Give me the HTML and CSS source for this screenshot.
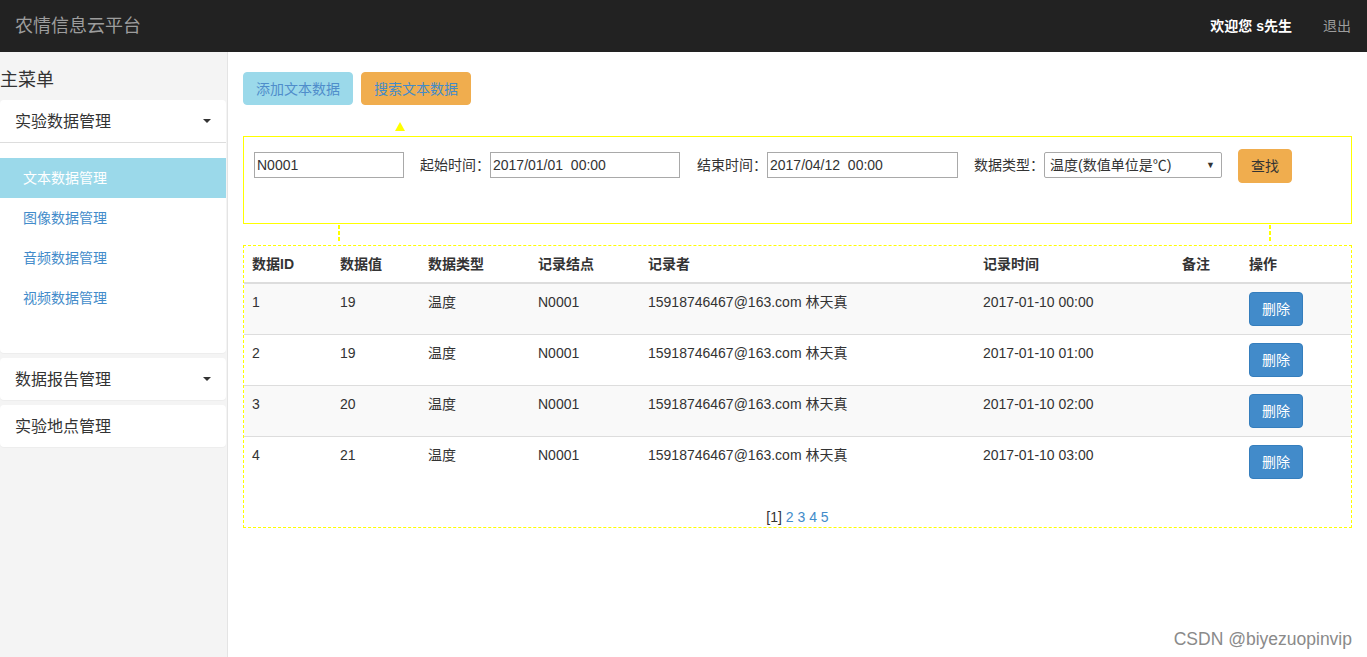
FILE: index.html
```html
<!DOCTYPE html>
<html lang="zh-CN">
<head>
<meta charset="utf-8">
<title>农情信息云平台</title>
<link rel="stylesheet" href="styles.css">
</head>
<body>
<header class="navbar">
  <div class="brand">农情信息云平台</div>
  <div class="nav-right">
    <span class="welcome">欢迎您 s先生</span>
    <a class="logout">退出</a>
  </div>
</header>
<div class="layout">
  <aside class="sidebar">
    <div class="menu-title">主菜单</div>
    <div class="panel panel-open">
      <div class="panel-heading">实验数据管理<span class="caret"></span></div>
      <div class="panel-body">
        <a class="item active">文本数据管理</a>
        <a class="item">图像数据管理</a>
        <a class="item">音频数据管理</a>
        <a class="item">视频数据管理</a>
      </div>
    </div>
    <div class="panel">
      <div class="panel-heading">数据报告管理<span class="caret"></span></div>
    </div>
    <div class="panel">
      <div class="panel-heading">实验地点管理</div>
    </div>
  </aside>
  <main class="main">
    <div class="toolbar">
      <button class="btn btn-info">添加文本数据</button>
      <button class="btn btn-warning">搜索文本数据</button>
    </div>
    <div class="pointer-row"><span class="triangle"></span></div>
    <div class="search-box">
      <input class="inp inp-node" type="text" value="N0001">
      <label class="lbl">起始时间：</label>
      <input class="inp inp-date" type="text" value="2017/01/01  00:00">
      <label class="lbl">结束时间：</label>
      <input class="inp inp-date2" type="text" value="2017/04/12  00:00">
      <label class="lbl">数据类型：</label>
      <div class="select">温度(数值单位是℃)<span class="sel-caret">▼</span></div>
      <button class="btn btn-warning btn-find">查找</button>
    </div>
    <div class="connector">
      <span class="vline vline-left"></span>
      <span class="vline vline-right"></span>
    </div>
    <div class="table-box">
      <table class="data-table">
        <thead>
          <tr>
            <th class="c1">数据ID</th><th class="c2">数据值</th><th class="c3">数据类型</th><th class="c4">记录结点</th><th class="c5">记录者</th><th class="c6">记录时间</th><th class="c7">备注</th><th class="c8">操作</th>
          </tr>
        </thead>
        <tbody>
          <tr><td>1</td><td>19</td><td>温度</td><td>N0001</td><td>15918746467@163.com 林天真</td><td>2017-01-10 00:00</td><td></td><td><button class="btn btn-primary">删除</button></td></tr>
          <tr><td>2</td><td>19</td><td>温度</td><td>N0001</td><td>15918746467@163.com 林天真</td><td>2017-01-10 01:00</td><td></td><td><button class="btn btn-primary">删除</button></td></tr>
          <tr><td>3</td><td>20</td><td>温度</td><td>N0001</td><td>15918746467@163.com 林天真</td><td>2017-01-10 02:00</td><td></td><td><button class="btn btn-primary">删除</button></td></tr>
          <tr><td>4</td><td>21</td><td>温度</td><td>N0001</td><td>15918746467@163.com 林天真</td><td>2017-01-10 03:00</td><td></td><td><button class="btn btn-primary">删除</button></td></tr>
        </tbody>
      </table>
      <div class="pager">[1] <a>2</a> <a>3</a> <a>4</a> <a>5</a></div>
    </div>
  </main>
</div>
<div class="watermark">CSDN @biyezuopinvip</div>
</body>
</html>
```
FILE: styles.css
```css
* { box-sizing: border-box; }
html, body { margin: 0; padding: 0; height: 100%; }
body {
  font-family: "Liberation Sans", "Noto Sans CJK SC", sans-serif;
  font-size: 14px;
  line-height: 20px;
  color: #333;
  background: #fff;
  overflow: hidden;
}
a { color: #428bca; text-decoration: none; cursor: pointer; }

.navbar {
  height: 52px;
  background: #222;
  display: flex;
  align-items: center;
  justify-content: space-between;
  padding: 0 16px 0 15px;
}
.brand { color: #9d9d9d; font-size: 18px; line-height: 20px; }
.nav-right { display: flex; align-items: center; }
.welcome { color: #fff; font-weight: bold; margin-right: 31px; }
.logout { color: #9d9d9d; }

.layout { display: flex; height: calc(100% - 52px); }
.sidebar {
  width: 228px;
  flex: none;
  background: #f4f4f4;
  border-right: 1px solid #e4e4e4;
  padding-right: 1px;
}
.menu-title { font-size: 18px; line-height: 20px; padding: 18px 0 10px; }
.panel {
  background: #fff;
  border-radius: 4px;
  margin-bottom: 5px;
  box-shadow: 0 1px 1px rgba(0,0,0,0.03);
}
.panel-heading {
  height: 42px;
  padding: 10px 15px;
  font-size: 16px;
  line-height: 21px;
  display: flex;
  justify-content: space-between;
  align-items: center;
}
.panel-open .panel-heading { height: 43px; border-bottom: 1px solid #ddd; }
.caret {
  width: 0; height: 0;
  border-left: 4px solid transparent;
  border-right: 4px solid transparent;
  border-top: 4px solid #333;
  margin-right: 0;
}
.panel-body { padding: 15px 0 35px; }
.item {
  display: block;
  height: 40px;
  line-height: 40px;
  padding-left: 23px;
  color: #428bca;
}
.item.active { background: #9bd9ea; color: #fff; }

.main { flex: 1; padding: 20px 15px 0 15px; position: relative; }
.toolbar { display: flex; gap: 8px; }
.btn {
  font-family: inherit;
  font-size: 14px;
  line-height: 20px;
  border: 1px solid transparent;
  border-radius: 4px;
  padding: 6px 12px;
  cursor: pointer;
}
.btn-info { background: #9bd9ea; border-color: #9bd9ea; color: #4f8dcb; height: 33px; width: 110px; }
.btn-warning { background: #f0ad4e; border-color: #f0ad4e; color: #428bca; height: 33px; width: 110px; }
.btn-primary { background: #428bca; border-color: #357ebd; color: #fff; width: 54px; height: 34px; }

.pointer-row { height: 31px; position: relative; }
.triangle {
  position: absolute;
  left: 152px;
  top: 17px;
  width: 0; height: 0;
  border-left: 5px solid transparent;
  border-right: 5px solid transparent;
  border-bottom: 9px solid #ffff00;
}
.search-box {
  height: 88px;
  border: 1px solid #ffff00;
  padding: 12px 10px;
  display: flex;
  align-items: flex-start;
}
.inp {
  height: 26px;
  border: 1px solid #a9a9a9;
  font-family: inherit;
  font-size: 14px;
  color: #333;
  padding: 1px 2px;
  margin-top: 3px;
}
.inp-node { width: 150px; margin-right: 16px; }
.inp-date { width: 190px; margin-right: 17px; }
.inp-date2 { width: 191px; margin-right: 16px; }
.lbl { line-height: 20px; margin-top: 6px; }
.select {
  width: 178px;
  height: 26px;
  margin-top: 3px;
  border: 1px solid #a9a9a9;
  border-radius: 2px;
  padding: 2px 5px;
  font-size: 14px;
  line-height: 20px;
  position: relative;
  margin-right: 16px;
}
.sel-caret { position: absolute; right: 6px; top: 2px; font-size: 9px; color: #333; }
.btn-find { width: 54px; height: 34px; color: #333; }

.connector { height: 21px; position: relative; }
.vline {
  position: absolute;
  top: 1px;
  width: 2px;
  height: 18px;
  background: repeating-linear-gradient(to bottom, #ffff00 0 4px, transparent 4px 6px);
}
.vline-left { left: 95px; }
.vline-right { left: 1026px; }

.table-box {
  border: 1px dashed #ffff00;
  height: 283px;
}
.data-table { border-collapse: collapse; width: 100%; table-layout: fixed; }
.data-table th, .data-table td { padding: 8px; text-align: left; vertical-align: top; }
.data-table th { border-bottom: 2px solid #ddd; font-weight: bold; height: 35px; }
.data-table td { border-top: 1px solid #ddd; height: 51px; }
.data-table thead tr th { border-top: 0; }
.data-table tbody tr:first-child td { border-top: 0; }
.data-table tbody tr:nth-child(odd) { background: #f9f9f9; }
.c1 { width: 88px; } .c2 { width: 88px; } .c3 { width: 110px; } .c4 { width: 110px; }
.c5 { width: 335px; } .c6 { width: 199px; } .c7 { width: 67px; } .c8 { width: auto; }
.pager { text-align: center; margin-top: 19px; line-height: 20px; }

.watermark {
  position: absolute;
  right: 15px;
  bottom: 8px;
  color: #8a8a8a;
  font-size: 17.5px;
  font-family: "Liberation Sans", sans-serif;
}
```
